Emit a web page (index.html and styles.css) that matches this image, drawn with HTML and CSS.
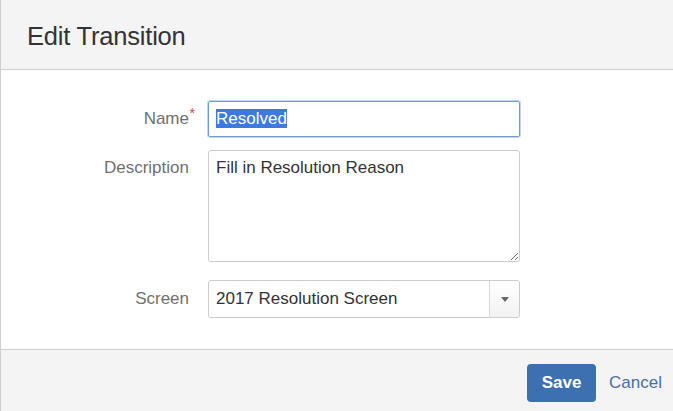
FILE: index.html
```html
<!DOCTYPE html>
<html>
<head>
<meta charset="utf-8">
<link rel="stylesheet" href="styles.css">
</head>
<body>
<div class="dialog">
  <header class="dialog-header">
    <h2 class="dialog-title">Edit Transition</h2>
  </header>
  <div class="dialog-body">
    <form class="form">
      <label class="field-label label-name">Name<span class="req">*</span></label>
      <div class="text-input focused"><span class="selected">Resolved</span></div>

      <label class="field-label label-desc">Description</label>
      <textarea class="textarea">Fill in Resolution Reason</textarea>

      <label class="field-label label-screen">Screen</label>
      <div class="select">
        <span class="select-value">2017 Resolution Screen</span>
        <span class="select-arrow"><span class="caret"></span></span>
      </div>
    </form>
  </div>
  <footer class="dialog-footer">
    <button class="btn-primary" type="button">Save</button>
    <a class="link-cancel">Cancel</a>
  </footer>
</div>
</body>
</html>
```

FILE: styles.css
```css
* { box-sizing: border-box; }
html, body { margin: 0; padding: 0; background: #fff; }
body {
  font-family: "Liberation Sans", Arial, sans-serif;
  font-size: 17px;
  color: #333;
  overflow: hidden;
}
.dialog {
  width: 673px;
  height: 411px;
  border-left: 1px solid #cfcfcf;
  display: flex;
  flex-direction: column;
}
.dialog-header {
  height: 70px;
  flex: none;
  background: #f4f4f4;
  border-bottom: 1px solid #cccccc;
  padding: 20px 0 0 26px;
}
.dialog-title {
  margin: 0;
  font-weight: normal;
  font-size: 25.5px;
  line-height: 33px;
  color: #333;
  letter-spacing: -0.2px;
}
.dialog-body {
  height: 279px;
  flex: none;
  padding-top: 31px;
}
.form {
  display: grid;
  grid-template-columns: 188px 312px;
  column-gap: 19px;
  row-gap: 13px;
  margin: 0;
}
.field-label {
  text-align: right;
  color: #707070;
  line-height: 36px;
  white-space: nowrap;
}
.label-name { position: relative; }
.req {
  position: absolute;
  right: -6px;
  top: -6px;
  color: #d04437;
  font-size: 14px;
}
.label-desc { line-height: 36px; }
.label-screen { margin-top: 5px; line-height: 38px; }
.text-input {
  height: 36px;
  border: 1px solid #6e9bd6;
  box-shadow: 0 0 0 1px #c3d6ef;
  border-radius: 2px;
  padding: 6px 7px;
  line-height: 22px;
}
.selected {
  background: #3b7ae3;
  color: #fff;
}
.textarea {
  display: block;
  width: 312px;
  height: 112px;
  margin: 0;
  border: 1px solid #cccccc;
  border-radius: 3px;
  padding: 6px 7px;
  font-family: "Liberation Sans", Arial, sans-serif;
  font-size: 17px;
  line-height: 22px;
  color: #333;
  resize: both;
  outline: none;
}
.select {
  margin-top: 5px;
  height: 38px;
  border: 1px solid #cccccc;
  border-radius: 3px;
  display: flex;
  align-items: stretch;
  background: #fff;
}
.select-value {
  flex: 1;
  padding-left: 7px;
  line-height: 36px;
  color: #333;
}
.select-arrow {
  width: 30px;
  border-left: 1px solid #d8d8d8;
  background: linear-gradient(#ffffff, #f2f2f2);
  display: flex;
  align-items: center;
  justify-content: center;
  border-radius: 0 3px 3px 0;
}
.caret {
  width: 0;
  height: 0;
  border-left: 4.5px solid transparent;
  border-right: 4.5px solid transparent;
  border-top: 5px solid #666;
}
.dialog-footer {
  flex: 1;
  background: #f4f4f4;
  border-top: 1px solid #cccccc;
  display: flex;
  justify-content: flex-end;
  align-items: flex-start;
  padding: 14px 11px 0 0;
  gap: 13px;
}
.btn-primary {
  height: 38px;
  width: 69px;
  background: #3c70b0;
  color: #fff;
  border: none;
  border-radius: 4px;
  font-family: "Liberation Sans", Arial, sans-serif;
  font-size: 17px;
  font-weight: bold;
  padding: 0;
}
.link-cancel {
  line-height: 38px;
  color: #4a6ea6;
}
```
